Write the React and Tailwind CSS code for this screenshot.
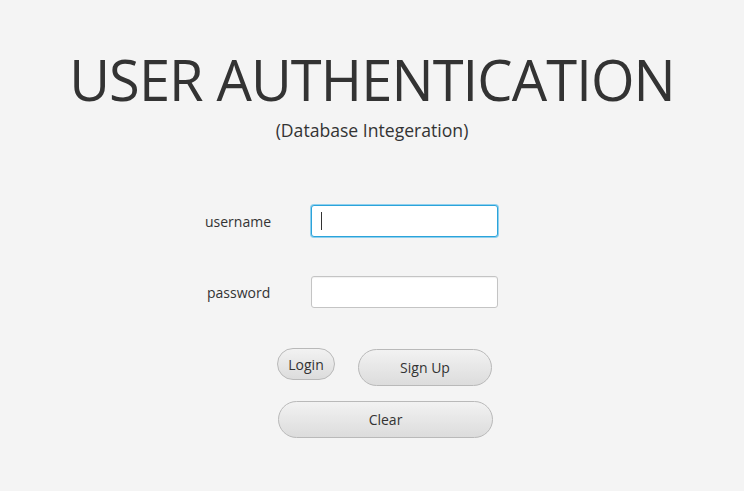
export default function App() {
  const font = { fontFamily: '"Open Sans", "Noto Sans", sans-serif' };
  return (
    <div className="w-[744px] h-[491px] bg-[#f4f4f4] text-[#333333] flex flex-col items-center" style={font}>
      <h1 className="mt-[49px] text-[56px] leading-[60px] font-normal tracking-[-0.9px] text-[#333333]">USER AUTHENTICATION</h1>
      <p className="mt-[9px] text-[17.6px] leading-[24px] text-[#333333]">(Database Integeration)</p>

      <div className="mt-[63px] w-[744px] flex flex-col">
        <div className="flex items-center h-[32px]">
          <span className="ml-[205px] w-[106px] text-[14px]">username</span>
          <div className="w-[187px] h-[32px] bg-white rounded-[3px] border border-[#2ba3da] shadow-[0_0_0_1px_#8fd0ee] flex items-center pl-[9px]">
            <div className="w-[1px] h-[18px] bg-[#333]" />
          </div>
        </div>
        <div className="flex items-center h-[32px] mt-[39px]">
          <span className="ml-[207px] w-[104px] text-[14px]">password</span>
          <div className="w-[187px] h-[32px] bg-white rounded-[3px] border border-[#c4c4c4] shadow-[inset_0_1px_1px_rgba(0,0,0,0.06)]" />
        </div>

        <div className="flex items-start mt-[40px] ml-[277px]">
          <button className="h-[32px] w-[58px] rounded-full border border-[#b9b9b9] bg-gradient-to-b from-[#f2f2f2] to-[#dcdcdc] text-[14px] text-[#333]">Login</button>
          <button className="ml-[23px] mt-[1px] h-[37px] w-[134px] rounded-full border border-[#b9b9b9] bg-gradient-to-b from-[#f2f2f2] to-[#dcdcdc] text-[14px] text-[#333]">Sign Up</button>
        </div>
        <button className="mt-[15px] ml-[278px] h-[37px] w-[215px] rounded-full border border-[#b9b9b9] bg-gradient-to-b from-[#f2f2f2] to-[#dcdcdc] text-[14px] text-[#333]">Clear</button>
      </div>
    </div>
  );
}
